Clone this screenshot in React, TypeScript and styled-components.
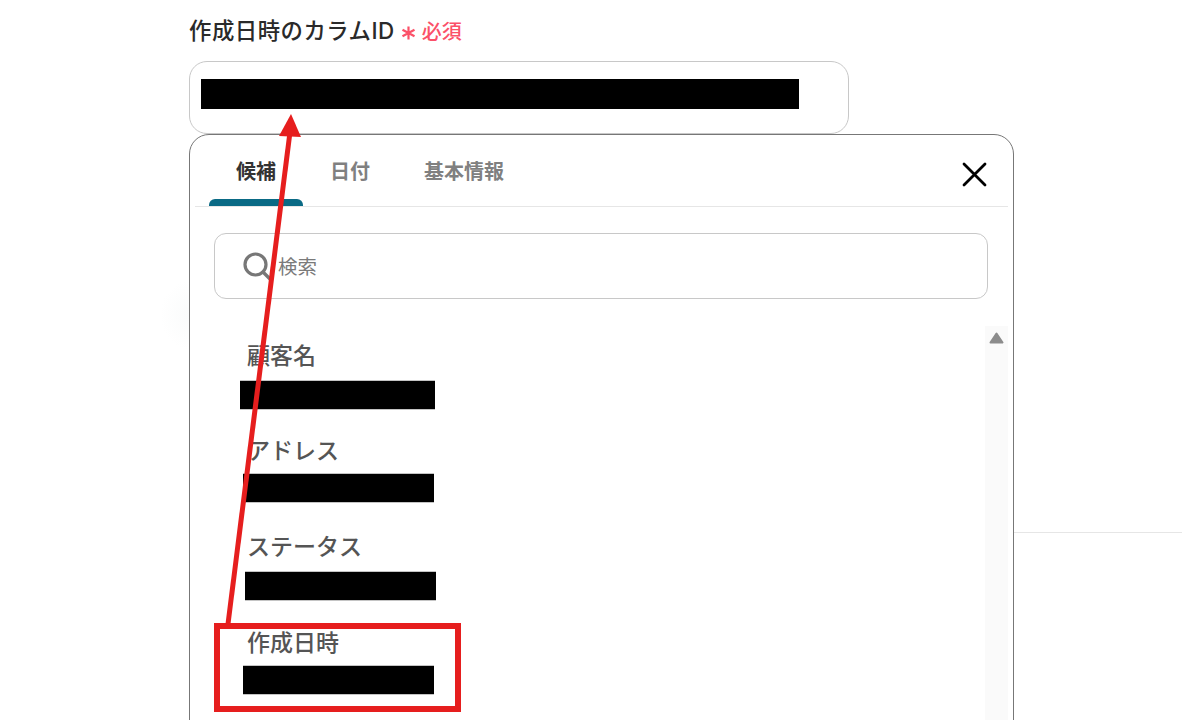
import React from "react";
import styled, { createGlobalStyle } from "styled-components";

const Global = createGlobalStyle`
  html, body { margin: 0; padding: 0; background: #fff; }
  body { font-family: "Noto Sans CJK JP", "Noto Sans", sans-serif; }
`;

const Page = styled.div`
  position: relative;
  width: 1182px;
  height: 720px;
  overflow: hidden;
  background: #fff;
  padding: 14px 0 0 189px;
  box-sizing: border-box;
`;

const Rule = styled.div`
  position: absolute;
  left: 1014px;
  right: 0;
  top: 532px;
  height: 1px;
  background: #e6e6e6;
`;

const Glow = styled.div`
  position: absolute;
  left: 160px;
  top: 280px;
  width: 60px;
  height: 70px;
  background: radial-gradient(ellipse at center, #fafbfb 0%, #ffffff 70%);
`;

const LabelRow = styled.div`
  display: flex;
  align-items: center;
  height: 34px;
  gap: 6px;
`;

const FieldLabel = styled.span`
  font-family: Inter, "Noto Sans CJK JP", sans-serif;
  font-size: 22.4px;
  font-weight: 500;
  letter-spacing: 0.5px;
  line-height: 34px;
  color: #2a2a2a;
`;

const Required = styled.span`
  display: flex;
  align-items: center;
  gap: 6px;
  font-size: 20px;
  font-weight: 500;
  color: #fb5168;
  line-height: 34px;
`;

const Star = styled.svg`
  width: 15px;
  height: 14px;
  margin-top: 4px;
  display: block;
`;

const Field = styled.div`
  position: relative;
  margin-top: 13px;
  width: 660px;
  height: 73px;
  box-sizing: border-box;
  border: 1px solid #c8c8c8;
  border-radius: 18px;
  padding: 17px 0 0 11px;
  background: #fff;
`;

const Redaction = styled.div<{ $w: number; $h: number; $left?: number; $top?: number; $edged?: boolean }>`
  width: ${(p) => p.$w}px;
  height: ${(p) => p.$h}px;
  margin-left: ${(p) => p.$left ?? 0}px;
  margin-top: ${(p) => p.$top ?? 0}px;
  background: #000;
  ${(p) => p.$edged && "box-shadow: 0 1px 0 #c4c4c4, 0 -1px 0 #c4c4c4;"}
`;

const Panel = styled.div`
  position: relative;
  width: 825px;
  height: 640px;
  box-sizing: border-box;
  border: 1px solid #777;
  border-radius: 20px;
  background: #fff;
  padding: 0 5px;
`;

const TabBar = styled.div`
  display: flex;
  align-items: stretch;
  height: 72px;
  box-sizing: border-box;
  border-bottom: 1px solid #e6e6e6;
  padding-left: 14px;
`;

const Tab = styled.div<{ $active?: boolean }>`
  position: relative;
  padding: 20px 27px 0;
  font-size: 20px;
  font-weight: 700;
  line-height: 32px;
  color: ${(p) => (p.$active ? "#333" : "#808080")};
  ${(p) =>
    p.$active &&
    `
    &::after {
      content: "";
      position: absolute;
      left: 0;
      right: 0;
      bottom: 0;
      height: 7px;
      border-radius: 6px 6px 0 0;
      background: #0a6a85;
    }
  `}
`;

const CloseIcon = styled.svg`
  position: absolute;
  left: 771px;
  top: 26px;
  width: 26px;
  height: 26px;
`;

const SearchBox = styled.div`
  display: flex;
  align-items: center;
  margin: 26px 0 0 19px;
  width: 774px;
  height: 66px;
  box-sizing: border-box;
  border: 1px solid #c8c8c8;
  border-radius: 12px;
  padding-left: 28px;
  gap: 6px;
`;

const SearchIcon = styled.svg`
  width: 29px;
  height: 29px;
  flex: none;
`;

const Placeholder = styled.span`
  font-size: 19.5px;
  color: #7a7a7a;
  line-height: 30px;
`;

const ListArea = styled.div`
  display: flex;
  margin-top: 27px;
  height: 400px;
`;

const List = styled.div`
  flex: 1;
  padding-top: 12px;
`;

const Item = styled.div<{ $h: number }>`
  height: ${(p) => p.$h}px;
`;

const ItemLabel = styled.div`
  margin-left: 52px;
  font-size: 23px;
  font-weight: 500;
  line-height: 32px;
  color: #555;
`;

const Track = styled.div`
  position: relative;
  width: 23px;
  background: #fafafa;
`;

const ArrowUp = styled.svg`
  position: absolute;
  left: 4px;
  top: 6px;
  width: 15px;
  height: 12px;
`;

const Overlay = styled.svg`
  position: absolute;
  left: 0;
  top: 0;
  width: 1182px;
  height: 720px;
  pointer-events: none;
`;

export default function App() {
  return (
    <>
      <Global />
      <Page>
        <Rule />
        <Glow />
        <LabelRow>
          <FieldLabel>作成日時のカラムID</FieldLabel>
          <Required>
            <Star viewBox="0 0 15 14">
              <path d="M7.5 .5v13M1.5 3.7l12 6.6M13.5 3.7l-12 6.6" stroke="#fb5168" strokeWidth="2.2" fill="none" />
            </Star>
            必須
          </Required>
        </LabelRow>
        <Field>
          <Redaction $w={598} $h={30} />
        </Field>
        <Panel>
          <TabBar>
            <Tab $active>候補</Tab>
            <Tab>日付</Tab>
            <Tab>基本情報</Tab>
          </TabBar>
          <CloseIcon viewBox="0 0 26 26">
            <path d="M3 3 24 24M24 3 3 24" stroke="#000" strokeWidth="2.8" strokeLinecap="round" fill="none" />
          </CloseIcon>
          <SearchBox>
            <SearchIcon viewBox="0 0 29 29">
              <circle cx="12.5" cy="12.5" r="10.5" stroke="#777" strokeWidth="3.2" fill="none" />
              <path d="M20 20 27 27" stroke="#777" strokeWidth="3.4" strokeLinecap="round" />
            </SearchIcon>
            <Placeholder>検索</Placeholder>
          </SearchBox>
          <ListArea>
            <List>
              <Item $h={95}>
                <ItemLabel>顧客名</ItemLabel>
                <Redaction $edged $w={195} $h={28} $left={45} $top={11} />
              </Item>
              <Item $h={96}>
                <ItemLabel>アドレス</ItemLabel>
                <Redaction $edged $w={191} $h={28} $left={48} $top={9} />
              </Item>
              <Item $h={96}>
                <ItemLabel>ステータス</ItemLabel>
                <Redaction $edged $w={191} $h={28} $left={50} $top={11} />
              </Item>
              <Item $h={96}>
                <ItemLabel>作成日時</ItemLabel>
                <Redaction $edged $w={191} $h={28} $left={48} $top={9} />
              </Item>
            </List>
            <Track>
              <ArrowUp viewBox="0 0 15 12">
                <path d="M7.5 1.5 13.5 10.5H1.5Z" fill="#8c8c8c" stroke="#8c8c8c" strokeWidth="2" strokeLinejoin="round" />
              </ArrowUp>
            </Track>
          </ListArea>
        </Panel>
        <Overlay viewBox="0 0 1182 720">
          <rect x="217" y="626" width="241" height="83" fill="none" stroke="#e61e1e" strokeWidth="6" />
          <path d="M228 624 290 132" stroke="#e61e1e" strokeWidth="5" fill="none" />
          <path d="M291 114 301 137 279 136Z" fill="#e61e1e" />
        </Overlay>
      </Page>
    </>
  );
}
